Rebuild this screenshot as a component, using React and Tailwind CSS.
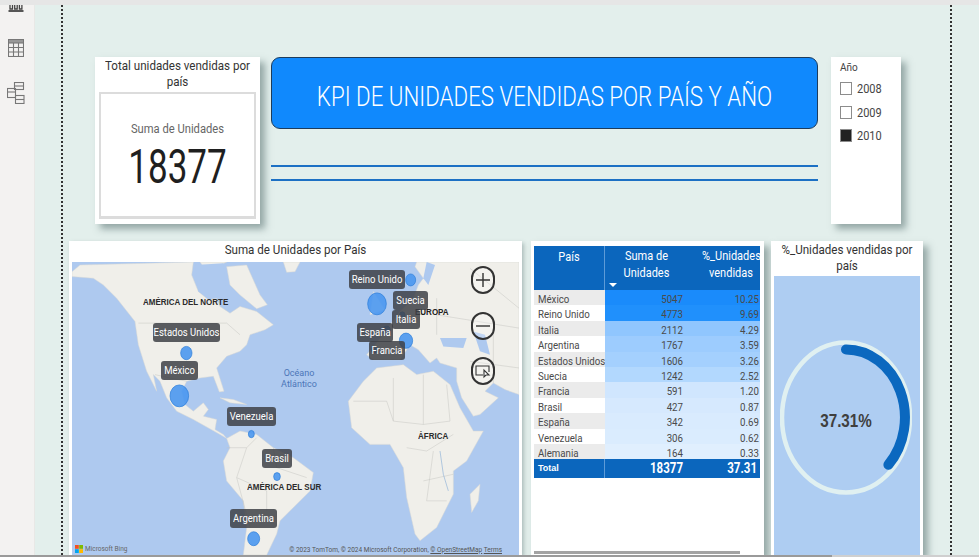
const din = "font-['Roboto',sans-serif]";

const rows = [
  ["México", "5047", "10.25", "bg-[#1a8bfb]"],
  ["Reino Unido", "4773", "9.69", "bg-[#2090fc]"],
  ["Italia", "2112", "4.29", "bg-[#90c6fe]"],
  ["Argentina", "1767", "3.59", "bg-[#9dccfe]"],
  ["Estados Unidos", "1606", "3.26", "bg-[#a4d0fe]"],
  ["Suecia", "1242", "2.52", "bg-[#b2d8fe]"],
  ["Francia", "591", "1.20", "bg-[#d0e6fe]"],
  ["Brasil", "427", "0.87", "bg-[#d6e9fe]"],
  ["España", "342", "0.69", "bg-[#d9ebfe]"],
  ["Venezuela", "306", "0.62", "bg-[#daecfe]"],
  ["Alemania", "164", "0.33", "bg-[#e0effe]"],
];

function WorldMap() {
  const land = "#f0efea";
  return (
    <svg viewBox="36 81 1341 882" preserveAspectRatio="none" className="absolute inset-0 w-full h-full">
      <rect x="36" y="81" width="1341" height="882" fill="#aec9ef" />
      <g fill={land} stroke="#d8d8d4" strokeWidth="1.5" strokeLinejoin="round">
        <path d="M36 110 L60 90 L400 81 L395 120 L415 170 L445 195 L470 190 L480 215 L510 235 L540 215 L590 230 L640 270 L615 285 L570 300 L560 330 L540 350 L500 365 L470 400 L492 470 L478 472 L460 425 L420 430 L380 440 L365 470 L375 510 L400 530 L430 505 L445 525 L430 545 L470 555 L465 585 L490 600 L500 612 L480 600 L400 555 L350 530 L320 490 L300 440 L280 420 L290 470 L260 410 L235 330 L225 260 L170 190 L130 150 L100 130 L36 125 Z" />
        <path d="M500 612 L540 590 L590 600 L640 640 L700 670 L760 715 L750 770 L700 820 L660 860 L650 900 L620 963 L550 963 L560 880 L550 800 L500 740 L490 680 L510 640 Z" />
        <path d="M500 95 L560 90 L600 180 L622 210 L590 222 L540 180 L510 150 Z" />
        <path d="M420 81 L500 81 L480 90 L430 95 Z" />
        <path d="M670 81 L720 81 L705 110 L680 112 Z" />
        <path d="M480 490 L520 495 L560 510 L510 505 Z" />
        <path d="M1075 150 L1090 130 L1065 95 L1070 81 L1377 81 L1377 480 L1335 465 L1300 445 L1275 470 L1315 490 L1260 540 L1240 545 L1205 490 L1190 440 L1190 400 L1140 385 L1130 370 L1110 385 L1075 345 L1050 330 L1020 375 L990 375 L940 375 L920 360 L945 330 L990 270 L1020 230 L1060 190 Z" />
        <path d="M940 170 L975 225 L930 240 Z" />
        <path d="M865 500 L910 440 L950 400 L1030 390 L1070 420 L1120 410 L1170 450 L1200 520 L1240 590 L1270 590 L1220 680 L1180 710 L1180 780 L1130 880 L1080 920 L1065 900 L1040 790 L1030 700 L990 630 L930 630 L875 580 Z" />
        <path d="M1230 780 L1260 750 L1255 800 L1235 835 Z" />
      </g>
      <g fill="#aec9ef" stroke="none">
        <path d="M1140 310 L1220 310 L1210 340 L1150 335 Z" />
        <path d="M1240 290 L1275 300 L1290 360 L1260 350 Z" />
        <path d="M405 90 L490 85 L500 170 L470 190 L445 190 L415 170 Z" />
        <path d="M1100 81 L1125 90 L1105 150 L1090 130 Z" />
      </g>
      <g fill="none" stroke="#c6c6c2" strokeWidth="1.5">
        <path d="M235 265 L500 265 L540 300" />
        <path d="M285 420 L330 430 L380 440" />
        <path d="M500 640 L560 640 L590 610 M560 640 L530 730 L620 770 L620 830 M530 730 L570 880 M640 640 L650 700 L740 730" />
        <path d="M880 500 L980 500 L1000 560 L1090 570 L1170 560 L1160 450 M1000 430 L1000 560 M1090 420 L1090 570 M1040 640 L1100 650 L1180 600 M1090 740 L1180 720 M1120 650 L1100 800 L1160 800" />
        <path d="M1130 190 L1130 300 M1230 100 L1377 220 M1130 240 L1377 280 M1300 290 L1300 445 M1230 380 L1377 400" />
      </g>
      <path d="M1140 650 L1150 720 L1165 770" fill="none" stroke="#8fb2d8" strokeWidth="2" />
      <g fill="#4a97f0" fillOpacity="0.9" stroke="#2a7bd8" strokeWidth="2">
        <ellipse cx="379" cy="355" rx="17" ry="20" />
        <ellipse cx="358" cy="484" rx="28" ry="33" />
        <ellipse cx="574" cy="599" rx="9" ry="11" />
        <ellipse cx="651" cy="727" rx="10" ry="12" />
        <ellipse cx="581" cy="914" rx="18" ry="21" />
        <ellipse cx="1052" cy="135" rx="15" ry="18" />
        <ellipse cx="951" cy="207" rx="28" ry="33" />
        <ellipse cx="1038" cy="318" rx="20" ry="23" />
        <ellipse cx="980" cy="287" rx="11" ry="13" />
        <ellipse cx="1027" cy="240" rx="8" ry="9" />
        <ellipse cx="943" cy="345" rx="9" ry="10" />
      </g>
    </svg>
  );
}

function Pin({ className, children }) {
  return (
    <div className={`absolute h-[19px] flex items-center justify-center rounded-[3px] bg-[#3e4146]/85 text-white leading-none whitespace-nowrap ${className}`}>
      <span className="text-[9.5px] scale-y-[1.12]">{children}</span>
    </div>
  );
}

function Region({ className, children }) {
  return (
    <div className={`absolute text-[8px] font-bold text-[#2b2b2b] leading-none whitespace-nowrap scale-y-[1.2] font-['Liberation_Sans',sans-serif] ${className}`}>
      {children}
    </div>
  );
}

function ZoomBtn({ className, children }) {
  return (
    <div className={`absolute w-[24px] h-[28px] rounded-full border-2 border-[#333] bg-white/25 flex items-center justify-center ${className}`}>
      {children}
    </div>
  );
}

export default function App() {
  return (
    <div className={`w-[979px] h-[557px] overflow-hidden flex flex-col bg-[#e3efec] ${din}`}>
      <div className="h-[5px] bg-[#e6e6e6] shrink-0" />
      <div className="flex-1 flex min-h-0">
        <aside className="w-[35px] shrink-0 bg-[#f3f2f1] border-r border-[#e8e8e6] flex flex-col items-start overflow-hidden">
          <svg width="16" height="8" viewBox="0 0 16 8" className="ml-[8px]" fill="none" stroke="#444" strokeWidth="1.3">
            <path d="M2 0v4h2.5V0M6.7 0v4h2.5V0M11.4 0v4h2.5V0" />
            <path d="M0.5 6h15" strokeWidth="1.8" />
          </svg>
          <svg width="16" height="18" viewBox="0 0 16 18" className="ml-[8px] mt-[26px]" fill="none" stroke="#777" strokeWidth="1.1">
            <rect x="0.5" y="0.5" width="15" height="17" />
            <rect x="0.5" y="0.5" width="15" height="3.5" fill="#999" />
            <path d="M5.5 4v13.5M10.5 4v13.5M0.5 8.5h15M0.5 13h15" />
          </svg>
          <svg width="18" height="22" viewBox="0 0 18 22" className="ml-[7px] mt-[25px]" fill="none" stroke="#777" strokeWidth="1.1">
            <rect x="7.5" y="0.5" width="9" height="7" />
            <path d="M7.5 4h9" />
            <rect x="0.5" y="6.5" width="8" height="9" />
            <path d="M0.5 10h8" />
            <rect x="8.5" y="13.5" width="8.5" height="8" />
            <path d="M8.5 17.5h8.5" />
          </svg>
        </aside>
        <main className="flex-1 pl-[26px] min-w-0">
          <div className="w-[891px] h-full border-x-2 border-dotted border-[#333] pt-[52px] flex flex-col">
            <section className="flex items-start ml-[32px] shrink-0">
              <div className="w-[165px] h-[167px] bg-white shadow-[5px_5px_7px_rgba(70,95,95,0.5)] flex flex-col px-[4px] pb-[5px]">
                <div className="h-[35px] flex items-start justify-center">
                  <div className="text-[11.6px] leading-[14px] text-[#333] text-center scale-y-[1.15] mt-[2px] whitespace-nowrap">
                    Total unidades vendidas por<br />país
                  </div>
                </div>
                <div className="flex-1 border-2 border-b-[3px] border-[#dcdcdc] flex flex-col items-center pt-[28px]">
                  <div className="text-[11.2px] leading-[16px] text-[#666] scale-y-[1.15]">Suma de Unidades</div>
                  <div className="text-[35px] leading-[30px] mt-[15px] text-[#1f1f1f] scale-y-[1.35]">18377</div>
                </div>
              </div>
              <div className="w-[547px] ml-[11px] flex flex-col">
                <div className="h-[72px] rounded-[9px] bg-[#1089fd] border border-[#1d3c5c] flex items-center justify-center text-white pt-[9px]">
                  <span className="text-[22.3px] font-light scale-y-[1.2]">KPI DE UNIDADES VENDIDAS POR PAÍS Y AÑO</span>
                </div>
                <div className="h-[2px] bg-[#1c70c4] mt-[36px]" />
                <div className="h-[2px] bg-[#1c70c4] mt-[12px]" />
              </div>
              <div className="w-[70px] h-[167px] ml-[13px] bg-white shadow-[5px_5px_7px_rgba(70,95,95,0.5)] pl-[9px] pt-[5px] text-[#444]">
                <div className="text-[10px] leading-[12px]">Año</div>
                <div className="mt-[8px] flex flex-col gap-[10.5px]">
                  {[["2008", false], ["2009", false], ["2010", true]].map(([y, on]) => (
                    <div key={y} className="flex items-center gap-[5px] h-[13px]">
                      <span className={`w-[12px] h-[13px] border border-[#8c8c8c] ${on ? "bg-[#222]" : "bg-white"}`} />
                      <span className="text-[11px] leading-none scale-y-[1.15]">{y}</span>
                    </div>
                  ))}
                </div>
              </div>
            </section>
            <section className="flex items-stretch ml-[6px] mt-[17px] flex-1 min-h-0">
              <div className="w-[453px] bg-white px-[3px] flex flex-col shadow-[2px_2px_4px_rgba(70,95,95,0.35)]">
                <div className="h-[21px] flex justify-center">
                  <div className="text-[11.6px] leading-[19px] text-[#333] scale-y-[1.15]">Suma de Unidades por País</div>
                </div>
                <div className="relative flex-1 overflow-hidden">
                  <WorldMap />
                  <Region className="left-[71px] top-[37px]">AMÉRICA DEL NORTE</Region>
                  <Region className="left-[175px] top-[222px]">AMÉRICA DEL SUR</Region>
                  <Region className="left-[343px] top-[47px] !text-[#222]">EUROPA</Region>
                  <Region className="left-[346px] top-[171px]">ÁFRICA</Region>
                  <div className="absolute left-[207px] top-[106px] w-[40px] text-center text-[9px] leading-[11px] text-[#4c76b8]">Océano Atlántico</div>
                  <Pin className="left-[81px] top-[61px] w-[67px]">Estados Unidos</Pin>
                  <Pin className="left-[89px] top-[99px] w-[37px]">México</Pin>
                  <Pin className="left-[155px] top-[145px] w-[49px]">Venezuela</Pin>
                  <Pin className="left-[190px] top-[187px] w-[30px]">Brasil</Pin>
                  <Pin className="left-[158px] top-[247px] w-[47px]">Argentina</Pin>
                  <Pin className="left-[277px] top-[8px] w-[56px]">Reino Unido</Pin>
                  <Pin className="left-[321px] top-[29px] w-[35px]">Suecia</Pin>
                  <Pin className="left-[320px] top-[48px] w-[28px]">Italia</Pin>
                  <Pin className="left-[285px] top-[61px] w-[36px]">España</Pin>
                  <Pin className="left-[297px] top-[79px] w-[36px]">Francia</Pin>
                  <ZoomBtn className="left-[399px] top-[4px]">
                    <svg width="16" height="16" viewBox="0 0 16 16" stroke="#333" strokeWidth="1.4"><path d="M8 1v14M1 8h14" /></svg>
                  </ZoomBtn>
                  <ZoomBtn className="left-[399px] top-[50px]">
                    <svg width="16" height="16" viewBox="0 0 16 16" stroke="#333" strokeWidth="1.4"><path d="M1 8h14" /></svg>
                  </ZoomBtn>
                  <ZoomBtn className="left-[399px] top-[95px]">
                    <svg width="16" height="16" viewBox="0 0 16 16" fill="none" stroke="#333" strokeWidth="1.1">
                      <path d="M8 12H1V3h13v6" />
                      <path d="M9 7l0 7 2-2 3 0z" fill="#fff" />
                    </svg>
                  </ZoomBtn>
                  <div className="absolute left-[3px] bottom-[2px] flex items-center gap-[2px] text-[6.5px] leading-none text-[#666]">
                    <svg width="8" height="8" viewBox="0 0 8 8">
                      <rect width="3.8" height="3.8" fill="#f25022" />
                      <rect x="4.2" width="3.8" height="3.8" fill="#7fba00" />
                      <rect y="4.2" width="3.8" height="3.8" fill="#00a4ef" />
                      <rect x="4.2" y="4.2" width="3.8" height="3.8" fill="#ffb900" />
                    </svg>
                    Microsoft Bing
                  </div>
                  <div className="absolute right-[17px] bottom-[2px] text-[6.5px] leading-none text-[#555] whitespace-nowrap">
                    © 2023 TomTom, © 2024 Microsoft Corporation, <span className="underline">© OpenStreetMap</span>  <span className="underline">Terms</span>
                  </div>
                </div>
              </div>

              <div className="w-[233px] ml-[9px] bg-white pt-[5px] pl-[3px] flex flex-col shadow-[5px_5px_7px_rgba(70,95,95,0.5)]">
                <div className="w-[226px] overflow-hidden">
                  <div className="grid grid-cols-[71px_83px_72px] h-[44px] bg-[#0b66bd] text-white text-[11px] leading-[15px] text-center">
                    <div className="border-r border-[#5d9bd8] pt-[4px]"><div className="scale-y-[1.13]">País</div></div>
                    <div className="pt-[4px] relative">
                      <div className="scale-y-[1.13]">Suma de<br />Unidades</div>
                      <span className="absolute left-[4px] bottom-[3px] w-0 h-0 border-x-[4px] border-x-transparent border-t-[4px] border-t-white" />
                    </div>
                    <div className="pt-[4px] pl-[14px] whitespace-nowrap"><div className="scale-y-[1.13]">%_Unidades<br />vendidas</div></div>
                  </div>
                  {rows.map(([name, a, b, c], i) => (
                    <div key={name} className="grid grid-cols-[71px_155px] h-[15.4px] text-[9.7px] leading-[15px] text-[#4a4a4a]">
                      <div className={`pl-[4px] whitespace-nowrap overflow-hidden ${i % 2 === 0 ? "bg-[#ebebeb]" : "bg-white"}`}><div className="scale-y-[1.12] origin-left translate-y-[2px]">{name}</div></div>
                      <div className={`grid grid-cols-[78px_77px] text-right overflow-hidden ${c}`}>
                        <span className="block scale-y-[1.12] translate-y-[2px]">{a}</span>
                        <span className="block pr-[1px] scale-y-[1.12] translate-y-[2px]">{b}</span>
                      </div>
                    </div>
                  ))}
                  <div className="grid grid-cols-[71px_78px_77px] h-[19px] bg-[#0b66bd] text-white font-bold items-center text-right">
                    <div className="text-left pl-[4px] text-[9px] border-r border-[#5d9bd8] leading-[19px] font-['Liberation_Sans',sans-serif]">Total</div>
                    <div className="text-[11.5px] scale-y-[1.25] origin-right">18377</div>
                    <div className="text-[11.5px] pr-[3px] scale-y-[1.25] origin-right">37.31</div>
                  </div>
                </div>
                <div className="mt-auto mb-[1px] w-[206px] h-[3px] bg-[#a3a3a3]" />
              </div>

              <div className="w-[152px] ml-[7px] bg-white px-[3px] flex flex-col shadow-[5px_5px_7px_rgba(70,95,95,0.5)]">
                <div className="h-[35px] flex justify-center">
                  <div className="text-[11.6px] leading-[14px] text-[#333] text-center scale-y-[1.15] mt-[3px] whitespace-nowrap">
                    %_Unidades vendidas por<br />país
                  </div>
                </div>
                <div className="flex-1 bg-[#aecdf2] pl-[6px] pt-[64px]">
                  <div className="relative w-[132px] h-[155px] flex items-center justify-center pt-[7px]">
                    <svg viewBox="0 0 132 155" className="absolute inset-0 w-full h-full" fill="none">
                      <ellipse cx="66" cy="77.5" rx="64" ry="75" stroke="#e0f0f1" strokeWidth="4.5" />
                      <path d="M66 9.5A59 68 0 0 1 108.4 124.7" stroke="#0b68bf" strokeWidth="10" strokeLinecap="round" />
                    </svg>
                    <span className="relative text-[15.2px] font-bold text-[#3f3f3f] font-['Liberation_Sans',sans-serif] scale-y-[1.25]">37.31%</span>
                  </div>
                </div>
              </div>
            </section>
          </div>
        </main>
      </div>
      <div className="h-[2px] shrink-0 bg-[#cfcfcf] flex">
        <div className="w-[832px] bg-[#9a9a9a]" />
      </div>
    </div>
  );
}
